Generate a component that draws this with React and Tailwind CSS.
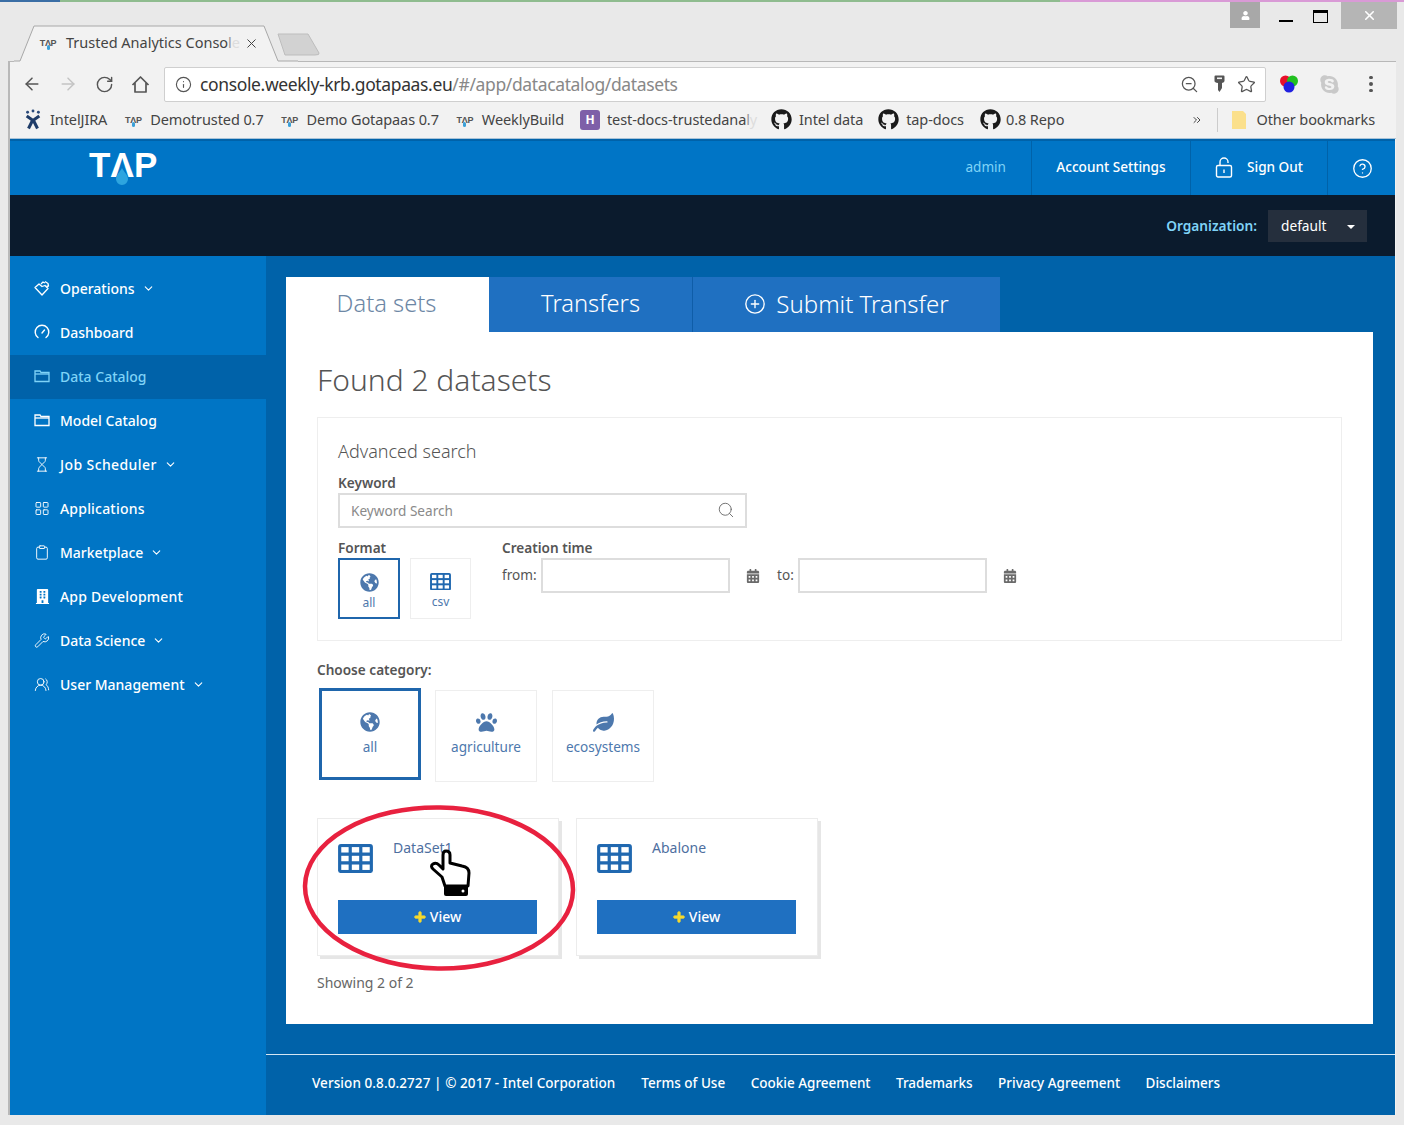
import {
  ArrowLeft, ArrowRight, RotateCw, Info, ZoomOut, Star, X, Search, CircleHelp, ChevronDown, CirclePlus,
  Hourglass, LayoutGrid, Clipboard, Wrench, UsersRound, ChevronsRight,
} from 'lucide-react';
import { FaGithub, FaGlobeAmericas, FaPaw, FaLeaf, FaCalendarAlt, FaBuilding, FaPlus, FaSkype, FaUser } from 'react-icons/fa';

function TapFavicon() {
  return (
    <span className="relative inline-block w-[20px] text-[9px] leading-[10px] font-bold text-[#555] text-center tracking-[-0.3px] shrink-0 font-['Liberation_Sans',sans-serif]">
      TΛP
      <span className="absolute left-[8.5px] top-[7px] w-[3px] h-[5px] rounded-full bg-[#3aa0d8]" />
    </span>
  );
}

function Bookmark({ icon, label, className = '', gap = 'gap-[7px]' }) {
  return (
    <div className={`flex items-center ${gap} ${className}`}>
      {icon}
      <span className="whitespace-nowrap">{label}</span>
    </div>
  );
}

function JiraIcon() {
  return (
    <svg width="18" height="23" viewBox="0 0 20 24" className="shrink-0">
      <circle cx="4" cy="4" r="1.6" fill="#2a4a7a" />
      <circle cx="10" cy="2.5" r="1.6" fill="#2a4a7a" />
      <circle cx="16" cy="4" r="1.6" fill="#2a4a7a" />
      <path d="M3 8 L10 13 L17 8 M10 12 L5 22 M10 12 L15 22" stroke="#1f3c68" strokeWidth="3.4" fill="none" />
    </svg>
  );
}

function OperationsIcon() {
  return (
    <svg width="17" height="17" viewBox="0 0 16 16" fill="none" stroke="currentColor" strokeWidth="1.3" strokeLinejoin="round">
      <path d="M1 7 L5 3.5 L8 6 L11 5 L14 8 L8 14.5 Z" />
      <path d="M7 3.5 L9 1.5 L11 2.5 M11 1 L14 3 L14.5 5.5 L12.5 6" />
    </svg>
  );
}

function GaugeIcon() {
  return (
    <svg width="16" height="16" viewBox="0 0 16 16" fill="none" stroke="currentColor" strokeWidth="1.4" strokeLinecap="round">
      <path d="M4 13.5 A6.8 6.8 0 1 1 12 13.5" />
      <path d="M8 9 L10.5 6" />
    </svg>
  );
}

function FolderIcon() {
  return (
    <svg width="16" height="14" viewBox="0 0 16 14" fill="none" stroke="currentColor" strokeWidth="1.3">
      <path d="M1 12.5 V2 H6 L7 3.5 H15 V12.5 Z" />
      <path d="M1 5 H15" />
    </svg>
  );
}

function TableIcon({ size = 35 }) {
  return (
    <svg width={size} height={size * 0.83} viewBox="0 0 36 30" className="shrink-0">
      <rect x="0" y="0" width="36" height="30" rx="3" fill="#2068b0" />
      {[3.2, 12.2, 21.2].map((y) =>
        [3.3, 14.2, 25.1].map((x) => <rect key={`${x}-${y}`} x={x} y={y} width="7.6" height="5.6" fill="white" />),
      )}
    </svg>
  );
}

function LockIcon() {
  return (
    <svg width="18" height="21" viewBox="0 0 18 21" fill="none" stroke="currentColor" strokeWidth="1.4">
      <rect x="1.5" y="8.5" width="15" height="11.5" rx="1.5" />
      <path d="M5 8.5 V5 A4 4 0 0 1 13 5 V6" />
      <path d="M9 12.5 V16" />
    </svg>
  );
}

const navItems = [
  { label: 'Operations', icon: OperationsIcon, chevron: true },
  { label: 'Dashboard', icon: GaugeIcon },
  { label: 'Data Catalog', icon: FolderIcon, active: true },
  { label: 'Model Catalog', icon: FolderIcon },
  { label: 'Job Scheduler', icon: Hourglass, chevron: true, size: 17, track: 'tracking-[0.4px]' },
  { label: 'Applications', icon: LayoutGrid, size: 19, track: 'tracking-[0.2px]' },
  { label: 'Marketplace', icon: Clipboard, chevron: true, size: 17 },
  { label: 'App Development', icon: FaBuilding, size: 15, track: 'tracking-[0.2px]' },
  { label: 'Data Science', icon: Wrench, chevron: true, size: 17 },
  { label: 'User Management', icon: UsersRound, chevron: true, size: 17 },
];

const footerLinks = ['Terms of Use', 'Cookie Agreement', 'Trademarks', 'Privacy Agreement', 'Disclaimers'];

function Sidebar() {
  return (
    <div className="w-[256px] shrink-0 bg-[#0075c5] pt-[11px]">
      {navItems.map((item) => {
        const Icon = item.icon;
        return (
          <div
            key={item.label}
            className={`h-[44px] flex items-center pl-[24px] pb-[2px] text-[14px] font-medium ${item.active ? 'bg-[#0062a9] text-[#7fd3f7]' : 'text-white'}`}
          >
            <span className="w-[16px] h-[16px] flex items-center justify-center">
              <Icon size={item.size} strokeWidth={1.4} />
            </span>
            <span className={`ml-[10px] ${item.track || ''}`}>{item.label}</span>
            {item.chevron && <ChevronDown size={13} strokeWidth={2} className="ml-[7px]" />}
          </div>
        );
      })}
    </div>
  );
}

function ChoiceTile({ icon, label, selected, className, labelGap = 'mt-[2px]' }) {
  return (
    <div className={`flex flex-col items-center justify-center text-[#4d78ad] ${selected ? 'border-[#1f66ac]' : 'border-[#eeeeee]'} ${className}`}>
      {icon}
      <span className={`${labelGap} leading-[18px]`}>{label}</span>
    </div>
  );
}

function DatasetCard({ name }) {
  return (
    <div className="w-[242px] h-[138px] bg-white border border-[#ececec] shadow-[3px_3px_0_#e6e6e6] px-[20px] pt-[25px]">
      <div className="flex h-[56px]">
        <TableIcon />
        <span className="ml-[20px] mt-[-5px] text-[14px] leading-[18px] text-[#4e6f9f]">{name}</span>
      </div>
      <div className="w-[199px] h-[34px] pb-[2px] bg-[#1f70c1] flex items-center justify-center gap-[4px] text-white text-[14px] font-medium">
        <FaPlus size={12} stroke="currentColor" strokeWidth={40} className="text-[#f5d92e] mt-[2px]" />
        View
      </div>
    </div>
  );
}

function Content() {
  return (
    <div className="flex-1 bg-[#0062a9] flex flex-col">
      <div className="pl-[20px] pr-[22px] pt-[21px]">
        <div className="flex h-[55px] text-[23.7px] font-light">
          <div className="w-[203px] pb-[1px] pr-[2px] bg-white text-[#6d87a5] flex items-center justify-center">Data sets</div>
          <div className="w-[204px] pb-[1px] bg-[#1f70c1] text-white flex items-center justify-center border-r border-[#0f5da8]">Transfers</div>
          <div className="w-[307px] pb-[1px] bg-[#1f70c1] text-white text-[24px] flex items-center justify-center gap-[10px]">
            <CirclePlus size={22} strokeWidth={1.5} />
            Submit Transfer
          </div>
        </div>

        <div className="bg-white h-[692px] px-[31px] pt-[28px] text-[#555]">
          <h1 className="text-[30px] leading-[40px] font-light text-[#555]">Found 2 datasets</h1>

          <div className="mt-[17px] border border-[#eeeeee] w-[1025px] h-[224px] pl-[20px] pt-[20px] text-[13.6px]">
            <div className="text-[18px] leading-[26px] font-light">Advanced search</div>
            <div className="mt-[10px] font-semibold leading-[18px]">Keyword</div>
            <div className="mt-[1px] w-[409px] h-[35px] border-2 border-[#dddddd] flex items-center justify-between pl-[11px] pr-[10px] text-[#8a8a8a]">
              <span className="pt-[1px]">Keyword Search</span>
              <Search size={18} strokeWidth={1.2} className="text-[#666] mb-[2px]" />
            </div>
            <div className="flex mt-[10px]">
              <div className="w-[164px]">
                <div className="font-semibold leading-[20px]">Format</div>
                <div className="flex gap-[10px] text-[12px]">
                  <ChoiceTile selected label="all" icon={<FaGlobeAmericas size={19} />} className="w-[62px] h-[61px] border-2 pt-[7px]" />
                  <ChoiceTile label="csv" icon={<TableIcon size={21} />} className="w-[61px] h-[61px] border pt-[7px]" labelGap="mt-[3px]" />
                </div>
              </div>
              <div>
                <div className="font-semibold leading-[20px]">Creation time</div>
                <div className="flex items-center">
                  <span className="w-[39px] shrink-0">from:</span>
                  <div className="w-[189px] h-[35px] border-2 border-[#dddddd]" />
                  <FaCalendarAlt size={14} className="ml-[16px] text-[#6a6a6a]" />
                  <span className="ml-[17px] w-[21px] shrink-0">to:</span>
                  <div className="w-[189px] h-[35px] border-2 border-[#dddddd]" />
                  <FaCalendarAlt size={14} className="ml-[16px] text-[#6a6a6a]" />
                </div>
              </div>
            </div>
          </div>

          <div className="mt-[20px] text-[13.6px] font-semibold leading-[18px]">Choose category:</div>
          <div className="flex items-start mt-[9px] ml-[2px] text-[13.6px]">
            <ChoiceTile selected label="all" icon={<FaGlobeAmericas size={20} />} className="w-[102px] h-[92px] border-[3px]" labelGap="mt-[6px]" />
            <ChoiceTile label="agriculture" icon={<FaPaw size={21} />} className="ml-[14px] mt-[2px] w-[102px] h-[92px] border pb-[5px]" labelGap="mt-[5px]" />
            <ChoiceTile label="ecosystems" icon={<FaLeaf size={21} />} className="ml-[15px] mt-[2px] w-[102px] h-[92px] border pb-[5px]" labelGap="mt-[5px]" />
          </div>

          <div className="flex gap-[17px] mt-[36px]">
            <DatasetCard name="DataSet1" />
            <DatasetCard name="Abalone" />
          </div>
          <div className="mt-[17px] text-[14px] leading-[20px] text-[#666]">Showing 2 of 2</div>
        </div>
      </div>

      <div className="mt-[30px] border-t border-[#d5e6f3] h-[61px] pb-[3px] flex items-center pl-[46px] gap-[25.5px] text-[13.5px] font-medium text-white">
        <span className="whitespace-nowrap mr-[0.5px] tracking-[0.08px]">Version 0.8.0.2727 | © 2017 - Intel Corporation</span>
        {footerLinks.map((link) => (
          <span key={link} className="whitespace-nowrap">{link}</span>
        ))}
      </div>
    </div>
  );
}

export default function App() {
  return (
    <div className="relative w-[1404px] h-[1125px] overflow-hidden bg-[#e9e9e9] font-['Noto_Sans',sans-serif]">
      {/* desktop peeking out at the top */}
      <div className="flex h-[2px]">
        <div className="w-[60px] bg-[#3a6ea5]" />
        <div className="w-[1000px] bg-[#8fbc8f]" />
        <div className="flex-1 bg-[#d99ad6]" />
      </div>

      {/* title bar with tab */}
      <div className="relative h-[59px] pl-[20px] pt-[23px]">
        <div className="flex items-end h-[37px]">
          <div className="w-[284px] h-[37px] relative">
            <svg width="284" height="38" viewBox="0 0 284 38" className="absolute left-[-6px] top-0">
              <path d="M0 36 L6 36 L20 1 L250 1 L264 36 L284 36 L284 38 L0 38 Z" fill="#f2f2f2" />
              <path d="M0 36 L6 36 L20 1 L250 1 L264 36 L284 36" fill="none" stroke="#a8a8a8" strokeWidth="1" />
            </svg>
            <div className="absolute left-[18px] top-[7px] flex items-center text-[14.5px] text-[#444]">
              <TapFavicon />
              <span className="ml-[8px] w-[170px] whitespace-nowrap">
                Trusted Analytics Conso<span className="text-[#999]">l</span><span className="text-[#ddd]">e</span>
              </span>
              <X size={15} strokeWidth={1.6} className="ml-[8px] mt-[2px] text-[#444]" />
            </div>
          </div>
          <svg width="46" height="24" viewBox="0 0 46 24" className="absolute left-[275px] top-[31px]">
            <path d="M3 1 L33 1 L44 20 Q45 22 40 22 L10 22 Z" fill="#d2d2d2" stroke="#bdbdbd" />
          </svg>
        </div>
        <div className="absolute right-[7px] top-0 flex items-start">
          <div className="w-[30px] h-[26px] bg-[#a8a8a8] flex items-center justify-center text-white mr-[19px]">
            <FaUser size={9} />
          </div>
          <div className="w-[14px] h-[2px] bg-black mt-[18px] mr-[20px]" />
          <div className="w-[15px] h-[13px] border border-black border-t-[3px] mt-[8px] mr-[13px]" />
          <div className="w-[56px] h-[27px] bg-[#b5b5b5] flex items-center justify-center text-white">
            <X size={15} strokeWidth={2.5} />
          </div>
        </div>
      </div>

      {/* browser chrome */}
      <div className="ml-[8px] mr-[8px] bg-[#f2f2f2] border-l-2 border-t border-[#b8b8b8]">
        <div className="h-[42px] pt-[2px] flex items-center text-[#555]">
          <ArrowLeft size={20} strokeWidth={1.8} className="ml-[12px]" />
          <ArrowRight size={20} strokeWidth={1.8} className="ml-[16px] text-[#c4c4c4]" />
          <RotateCw size={19} strokeWidth={1.8} className="ml-[17px]" />
          <svg width="19" height="19" viewBox="0 0 19 19" fill="none" stroke="currentColor" strokeWidth="1.7" strokeLinejoin="round" className="ml-[17px]">
            <path d="M1.5 10 L9.5 2 L17.5 10 M4 8 V17 H15 V8" />
          </svg>
          <div className="ml-[14px] w-[1102px] h-[35px] bg-white border border-[#cfcfcf] rounded-[2px] flex items-center pl-[10px] pr-[9px]">
            <Info size={17} strokeWidth={1.6} />
            <span className="ml-[8px] text-[17.5px] tracking-[-0.37px] text-[#333] whitespace-nowrap">
              console.weekly-krb.gotapaas.eu<span className="text-[#888]">/#/app/datacatalog/datasets</span>
            </span>
            <ZoomOut size={19} strokeWidth={1.6} className="ml-auto mr-[3px]" />
            <svg width="11" height="18" viewBox="0 0 11 18" className="ml-[12px]">
              <path d="M0.5 1.5 Q0.5 0.5 1.5 0.5 H9.5 Q10.5 0.5 10.5 1.5 V6 Q10.5 7.5 8 8 V13 L5.5 17 L4 15 V8 Q0.5 7.5 0.5 6 Z" fill="#555" />
              <rect x="3" y="2.5" width="5" height="1.6" fill="#f2f2f2" />
            </svg>
            <Star size={19} strokeWidth={1.6} className="ml-[12px]" />
          </div>
          <svg width="20" height="20" viewBox="0 0 20 20" className="ml-[13px]">
            <circle cx="6.5" cy="7" r="5.5" fill="#e8102a" />
            <circle cx="13.5" cy="7" r="5.5" fill="#22c020" />
            <circle cx="10" cy="13" r="5.5" fill="#2020e0" />
          </svg>
          <FaSkype size={21} className="ml-[20px] text-[#c9c9c9]" />
          <div className="ml-[29px] flex flex-col gap-[3px]">
            <span className="w-[3.5px] h-[3.5px] rounded-full bg-[#555]" />
            <span className="w-[3.5px] h-[3.5px] rounded-full bg-[#555]" />
            <span className="w-[3.5px] h-[3.5px] rounded-full bg-[#555]" />
          </div>
        </div>
        <div className="h-[35px] pb-[3px] flex items-center pl-[14px] text-[14.5px] tracking-[-0.1px] text-[#444] border-b border-[#a9c3d8]">
          <Bookmark icon={<JiraIcon />} label="IntelJIRA" gap="gap-[8px]" />
          <Bookmark icon={<TapFavicon />} label="Demotrusted 0.7" className="ml-[16px]" />
          <Bookmark icon={<TapFavicon />} label="Demo Gotapaas 0.7" className="ml-[16px]" />
          <Bookmark icon={<TapFavicon />} label="WeeklyBuild" className="ml-[16px]" />
          <div className="flex items-center ml-[16px]">
            <span className="w-[20px] h-[20px] rounded-[3px] bg-[#7e5fa8] text-white text-[12px] font-bold flex items-center justify-center">H</span>
            <span className="ml-[7px] w-[148px] whitespace-nowrap">
              test-docs-trustedana<span className="text-[#999]">l</span><span className="text-[#ddd]">y</span>
            </span>
          </div>
          <Bookmark icon={<FaGithub size={21} className="text-[#1a1a1a]" />} label="Intel data" className="ml-[16px]" />
          <Bookmark icon={<FaGithub size={21} className="text-[#1a1a1a]" />} label="tap-docs" className="ml-[15px]" />
          <Bookmark icon={<FaGithub size={21} className="text-[#1a1a1a]" />} label="0.8 Repo" className="ml-[16px]" gap="gap-[5px]" />
          <ChevronsRight size={12} className="ml-auto" />
          <div className="w-px h-[24px] bg-[#cccccc] ml-[14px]" />
          <svg width="16" height="20" viewBox="0 0 16 20" className="ml-[13px]">
            <path d="M1 1 H12 L15 4 V19 H1 Z" fill="#fbe08c" />
          </svg>
          <span className="ml-[9px] mr-[21px] whitespace-nowrap">Other bookmarks</span>
        </div>

        {/* page */}
        <div className="w-[1385px] h-[976px] flex flex-col">
          <div className="h-[56px] bg-[#0075c6] border-t-2 border-[#0062a9] flex items-center text-white text-[13.6px] font-medium">
            <div className="ml-[79px] mb-[6px] relative text-[35px] leading-[36px] font-bold tracking-[0.2px] font-['Liberation_Sans',sans-serif]">
              TΛP
              <svg width="12" height="17" viewBox="0 0 12 17" className="absolute left-[27px] top-[21px]">
                <path d="M6 0 C8 4 12 7 12 11 A6 6 0 0 1 0 11 C0 7 4 4 6 0 Z" fill="#2da5df" />
              </svg>
            </div>
            <div className="ml-auto flex h-full items-center">
              <span className="text-[#7fd3f7] font-normal pr-[25px] pb-[2px]">admin</span>
              <div className="w-[159px] h-full pb-[2px] flex items-center justify-center border-l border-[#0062a9]">Account Settings</div>
              <div className="w-[137px] h-full pb-[2px] flex items-center justify-center border-l border-[#0062a9] gap-[14px]">
                <LockIcon />
                Sign Out
              </div>
              <div className="w-[68px] h-full pl-[1px] flex items-center justify-center border-l border-[#0062a9]">
                <CircleHelp size={21} strokeWidth={1.5} />
              </div>
            </div>
          </div>

          <div className="h-[61px] bg-[#0b1b2d] flex items-center justify-end pr-[28px] text-[13.7px]">
            <span className="pt-[1px] font-semibold text-[#7fd3f7]">Organization:</span>
            <div className="ml-[11px] w-[99px] h-[32px] pt-[1px] bg-[#252f3d] text-white flex items-center pl-[13px]">
              default
              <span className="ml-[21px] mt-[2px] w-0 h-0 border-l-[4px] border-r-[4px] border-t-[4px] border-l-transparent border-r-transparent border-t-white" />
            </div>
          </div>

          <div className="flex flex-1">
            <Sidebar />
            <Content />
          </div>
        </div>
      </div>

      {/* red annotation ring and hand cursor laid over the first card */}
      <svg width="290" height="180" viewBox="0 0 290 180" className="absolute left-[295px] top-[798px]">
        <ellipse cx="144" cy="90" rx="134" ry="80.5" fill="none" stroke="#e8213f" strokeWidth="4.5" transform="rotate(1 144 90)" />
      </svg>
      <svg width="44" height="50" viewBox="0 0 44 50" className="absolute left-[429px] top-[849px]">
        <path d="M13 28 L4 20 Q1 17 4 15 Q7 13 10 16 L14 20 L14 6 Q14 2 17 2 Q21 2 21 6 L21 14 L33 17 Q40 18 40 24 L39 37 L16 37 Z" fill="white" stroke="black" strokeWidth="3" strokeLinejoin="round" />
        <rect x="15" y="36" width="24" height="11" rx="2" fill="black" />
        <circle cx="34" cy="42" r="1.5" fill="white" />
      </svg>
    </div>
  );
}
